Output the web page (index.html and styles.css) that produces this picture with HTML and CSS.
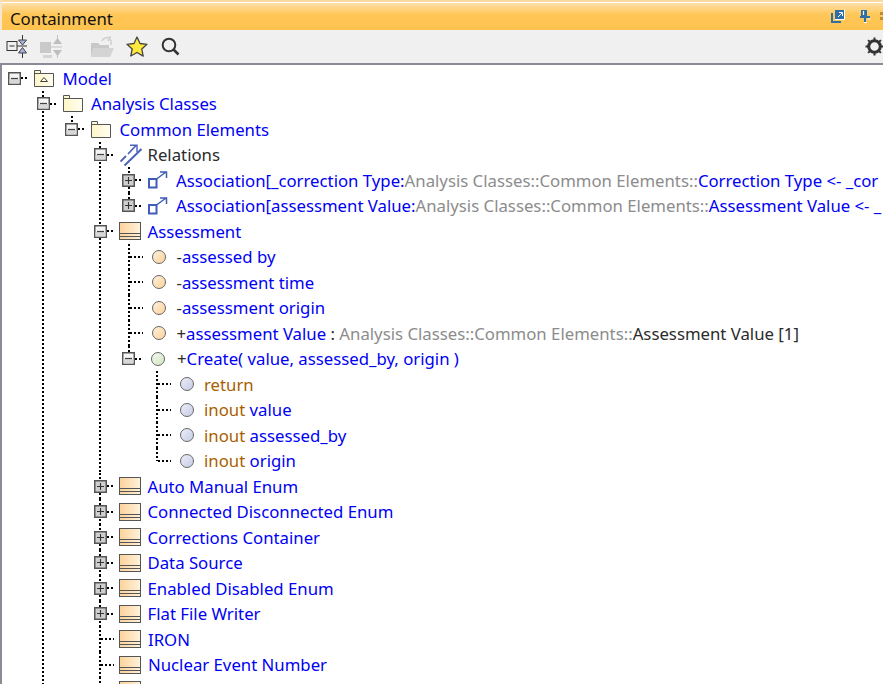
FILE: index.html
```html
<!DOCTYPE html>
<html>

<head>
    <meta charset="utf-8">
    <title>Containment</title>
    <link rel="stylesheet" href="styles.css">
</head>

<body>
    <svg class="defs" width="0" height="0">
        <symbol id="minus" viewBox="0 0 13 13">
            <rect x=".75" y=".75" width="11.5" height="11.5" fill="#f4f4f4" stroke="#555" stroke-width="1.5"/>
            <rect x="1.5" y="7" width="10" height="4.5" fill="#d8d8d8"/>
            <path d="M3 6.5h7" stroke="#444" stroke-width="1.2"/>
        </symbol>
        <symbol id="plus" viewBox="0 0 13 13">
            <rect x=".75" y=".75" width="11.5" height="11.5" fill="#cfcfcf" stroke="#555" stroke-width="1.5"/>
            <path d="M3 6.5h7M6.5 3v7" stroke="#333" stroke-width="1.1"/>
        </symbol>
        <linearGradient id="folderFill" x1="0" y1="0" x2="1" y2="0">
            <stop offset="0" stop-color="#fff6c8"/>
            <stop offset="1" stop-color="#fffdf0"/>
        </linearGradient>
        <linearGradient id="classFill" x1="0" y1="0" x2="1" y2="0">
            <stop offset="0" stop-color="#fdd29a"/>
            <stop offset="1" stop-color="#fff2dc"/>
        </linearGradient>
        <symbol id="folder" viewBox="0 0 20 17">
            <path d="M.5 16.5V.5h6v3h13v13z" fill="url(#folderFill)" stroke="#555"/>
            <path d="M.5 3.5h6" stroke="#555"/>
        </symbol>
        <symbol id="model" viewBox="0 0 20 17">
            <path d="M.5 16.5V.5h6v3h13v13z" fill="url(#folderFill)" stroke="#555"/>
            <path d="M.5 3.5h6" stroke="#555"/>
            <path d="M10 7.5l3.5 4h-7z" fill="none" stroke="#444"/>
        </symbol>
        <symbol id="relations" viewBox="0 0 23 22">
            <path d="M.5 17.5L6 12M8 10l8-8.500" stroke="#4a62b8" stroke-width="1.800" fill="none"/>
            <path d="M10 1.200h7V8" stroke="#4a62b8" stroke-width="1.400" fill="none"/>
            <path d="M4.500 21.500L21.500 5" stroke="#4a62b8" stroke-width="2" fill="none"/>
        </symbol>
        <symbol id="assoc" viewBox="0 0 20 18">
            <rect x="1" y="8" width="7.500" height="8.500" fill="none" stroke="#3f5cb8" stroke-width="2"/>
            <path d="M8.500 8L18 1M12 1h6.500v6" stroke="#3f5cb8" stroke-width="1.500" fill="none"/>
        </symbol>
        <symbol id="class" viewBox="0 0 22 18">
            <rect x=".5" y=".5" width="21" height="17" fill="url(#classFill)" stroke="#555"/>
            <path d="M.5 11.500h21M.5 14.500h21" stroke="#555"/>
        </symbol>
    </svg>

    <div class="panel">
        <div class="titlebar">
            <span class="title">Containment</span>
            <span class="title-tools">
                <svg width="14" height="14" viewBox="0 0 14 14">
                    <path d="M1 4v9h9" fill="none" stroke="#2f6fa8" stroke-width="2"/>
                    <rect x="4" y="1" width="9" height="9" fill="#2f6fa8"/>
                    <path d="M7 8l4-4M8 3.500h3.500V7" stroke="#fff" fill="none"/>
                    <path d="M4 10.500h9.500V.500" stroke="#fff" fill="none"/>
                </svg>
                <svg width="12" height="14" viewBox="0 0 12 14">
                    <path d="M2 1h6v6h3v2H7v4H5V9H1V7h1z" fill="#2f6fa8"/>
                    <path d="M4.500 2v4" stroke="#fff" stroke-width="1.200"/>
                    <path d="M8.500 10h3M5 13.500h3" stroke="#fff"/>
                </svg>
                <svg class="tool-cut" width="3" height="12" viewBox="0 0 3 12">
                    <path d="M0 2h3v3H0zM0 7h3v3H0z" fill="#b98c3c"/>
                </svg>
            </span>
        </div>

        <div class="toolbar">
            <svg class="tb-collapse" width="23" height="24" viewBox="0 0 23 24">
                <rect x="1" y="6.500" width="10" height="9" fill="none" stroke="#333"/>
                <path d="M3.500 11h5" stroke="#333"/>
                <path d="M11 11h10" stroke="#333"/>
                <path d="M16.500 0v5M16.500 18v5" stroke="#333"/>
                <path d="M12.500 5h8l-4 5zM12.500 18h8l-4-5.500z" fill="#a7b4dc" stroke="#444"/>
            </svg>
            <svg class="tb-expand" width="23" height="24" viewBox="0 0 23 24">
                <rect x="0" y="7" width="11" height="11" fill="#c9c9c9"/>
                <path d="M3 20h9v3H3z" fill="#d4d4d4"/>
                <path d="M13 9h9l-4.500-6zM13 15h9l-4.500 6z" fill="#bdbdbd"/>
                <path d="M10 12h12" stroke="#c4c4c4"/>
                <path d="M17.500 0v4M17.500 20v3" stroke="#c4c4c4"/>
            </svg>
            <svg class="tb-folder" width="23" height="23" viewBox="0 0 23 23">
                <path d="M0 8h7l2 2h9v10H0z" fill="#c8c8c8"/>
                <path d="M2 13h21l-4 9H0z" fill="#d4d4d4"/>
                <path d="M11 6c1-3 5-4 8-3M19 1v4h-3M20 5v5" stroke="#d0d0d0" stroke-width="1.500" fill="none"/>
            </svg>
            <svg class="tb-star" width="22" height="21" viewBox="0 0 22 21">
                <path d="M11 1l3 6.500 7 .8-5.200 4.800 1.400 7L11 16.500 4.800 20l1.400-7L1 8.300l7-.8z" fill="#ffe93c" stroke="#444" stroke-width="1.300" stroke-linejoin="round"/>
            </svg>
            <svg class="tb-search" width="19" height="19" viewBox="0 0 19 19">
                <circle cx="8" cy="8" r="6.300" fill="none" stroke="#333" stroke-width="2"/>
                <path d="M12.500 12.500l5 5" stroke="#333" stroke-width="2.500"/>
            </svg>
            <svg class="tb-gear" width="19" height="19" viewBox="0 0 19 19">
                <circle cx="9.500" cy="9.500" r="5.800" fill="none" stroke="#333" stroke-width="3"/>
                <path d="M9.500 .500v2.500M9.500 16v2.500M.500 9.500H3M16 9.500h2.500M3.100 3.100l1.800 1.800M14.100 14.100l1.800 1.800M15.900 3.100l-1.800 1.800M4.900 14.100l-1.800 1.800" stroke="#333" stroke-width="2"/>
            </svg>
        </div>

        <div class="tree">
            <ul class="root">
                <li class="end">
                    <div class="row">
                        <svg class="tgl"><use href="#minus"/></svg><i class="stub"></i>
                        <svg class="ico ico-folder"><use href="#model"/></svg>
                        <span class="txt">Model</span>
                    </div>
                    <ul>
                        <li>
                            <div class="row">
                                <svg class="tgl"><use href="#minus"/></svg><i class="stub"></i>
                                <svg class="ico ico-folder"><use href="#folder"/></svg>
                                <span class="txt">Analysis Classes</span>
                            </div>
                            <ul>
                                <li class="end">
                                    <div class="row">
                                        <svg class="tgl"><use href="#minus"/></svg><i class="stub"></i>
                                        <svg class="ico ico-folder"><use href="#folder"/></svg>
                                        <span class="txt">Common Elements</span>
                                    </div>
                                    <ul>
                                        <li>
                                            <div class="row">
                                                <svg class="tgl"><use href="#minus"/></svg><i class="stub"></i>
                                                <svg class="ico ico-rel"><use href="#relations"/></svg>
                                                <span class="txt dark">Relations</span>
                                            </div>
                                            <ul>
                                                <li>
                                                    <div class="row">
                                                        <svg class="tgl"><use href="#plus"/></svg><i class="stub"></i>
                                                        <svg class="ico ico-assoc"><use href="#assoc"/></svg>
                                                        <span class="txt">Association[_correction Type:<span class="gray">Analysis Classes::Common Elements::</span>Correction Type &lt;- _cor</span>
                                                    </div>
                                                </li>
                                                <li class="end">
                                                    <div class="row">
                                                        <svg class="tgl"><use href="#plus"/></svg><i class="stub"></i>
                                                        <svg class="ico ico-assoc"><use href="#assoc"/></svg>
                                                        <span class="txt">Association[assessment Value:<span class="gray">Analysis Classes::Common Elements::</span>Assessment Value &lt;- _</span>
                                                    </div>
                                                </li>
                                            </ul>
                                        </li>
                                        <li>
                                            <div class="row">
                                                <svg class="tgl"><use href="#minus"/></svg><i class="stub"></i>
                                                <svg class="ico ico-class"><use href="#class"/></svg>
                                                <span class="txt">Assessment</span>
                                            </div>
                                            <ul>
                                                <li>
                                                    <div class="row leaf">
                                                        <i class="stub"></i><i class="dot attr"></i>
                                                        <span class="txt"><span class="dark">-</span>assessed by</span>
                                                    </div>
                                                </li>
                                                <li>
                                                    <div class="row leaf">
                                                        <i class="stub"></i><i class="dot attr"></i>
                                                        <span class="txt"><span class="dark">-</span>assessment time</span>
                                                    </div>
                                                </li>
                                                <li>
                                                    <div class="row leaf">
                                                        <i class="stub"></i><i class="dot attr"></i>
                                                        <span class="txt"><span class="dark">-</span>assessment origin</span>
                                                    </div>
                                                </li>
                                                <li>
                                                    <div class="row leaf">
                                                        <i class="stub"></i><i class="dot attr"></i>
                                                        <span class="txt"><span class="dark">+</span>assessment Value <span class="dark">:</span> <span class="gray">Analysis Classes::Common Elements::</span><span class="dark">Assessment Value [1]</span></span>
                                                    </div>
                                                </li>
                                                <li class="end">
                                                    <div class="row">
                                                        <svg class="tgl"><use href="#minus"/></svg><i class="stub"></i>
                                                        <i class="dot oper"></i>
                                                        <span class="txt"><span class="dark">+</span>Create( value, assessed_by, origin )</span>
                                                    </div>
                                                    <ul>
                                                        <li>
                                                            <div class="row leaf">
                                                                <i class="stub"></i><i class="dot param"></i>
                                                                <span class="txt"><span class="brown">return</span></span>
                                                            </div>
                                                        </li>
                                                        <li>
                                                            <div class="row leaf">
                                                                <i class="stub"></i><i class="dot param"></i>
                                                                <span class="txt"><span class="brown">inout</span> value</span>
                                                            </div>
                                                        </li>
                                                        <li>
                                                            <div class="row leaf">
                                                                <i class="stub"></i><i class="dot param"></i>
                                                                <span class="txt"><span class="brown">inout</span> assessed_by</span>
                                                            </div>
                                                        </li>
                                                        <li class="end">
                                                            <div class="row leaf">
                                                                <i class="stub"></i><i class="dot param"></i>
                                                                <span class="txt"><span class="brown">inout</span> origin</span>
                                                            </div>
                                                        </li>
                                                    </ul>
                                                </li>
                                            </ul>
                                        </li>
                                        <li>
                                            <div class="row">
                                                <svg class="tgl"><use href="#plus"/></svg><i class="stub"></i>
                                                <svg class="ico ico-class"><use href="#class"/></svg>
                                                <span class="txt">Auto Manual Enum</span>
                                            </div>
                                        </li>
                                        <li>
                                            <div class="row">
                                                <svg class="tgl"><use href="#plus"/></svg><i class="stub"></i>
                                                <svg class="ico ico-class"><use href="#class"/></svg>
                                                <span class="txt">Connected Disconnected Enum</span>
                                            </div>
                                        </li>
                                        <li>
                                            <div class="row">
                                                <svg class="tgl"><use href="#plus"/></svg><i class="stub"></i>
                                                <svg class="ico ico-class"><use href="#class"/></svg>
                                                <span class="txt">Corrections Container</span>
                                            </div>
                                        </li>
                                        <li>
                                            <div class="row">
                                                <svg class="tgl"><use href="#plus"/></svg><i class="stub"></i>
                                                <svg class="ico ico-class"><use href="#class"/></svg>
                                                <span class="txt">Data Source</span>
                                            </div>
                                        </li>
                                        <li>
                                            <div class="row">
                                                <svg class="tgl"><use href="#plus"/></svg><i class="stub"></i>
                                                <svg class="ico ico-class"><use href="#class"/></svg>
                                                <span class="txt">Enabled Disabled Enum</span>
                                            </div>
                                        </li>
                                        <li>
                                            <div class="row">
                                                <svg class="tgl"><use href="#plus"/></svg><i class="stub"></i>
                                                <svg class="ico ico-class"><use href="#class"/></svg>
                                                <span class="txt">Flat File Writer</span>
                                            </div>
                                        </li>
                                        <li>
                                            <div class="row leaf">
                                                <i class="stub"></i>
                                                <svg class="ico ico-class"><use href="#class"/></svg>
                                                <span class="txt">IRON</span>
                                            </div>
                                        </li>
                                        <li>
                                            <div class="row leaf">
                                                <i class="stub"></i>
                                                <svg class="ico ico-class"><use href="#class"/></svg>
                                                <span class="txt">Nuclear Event Number</span>
                                            </div>
                                        </li>
                                        <li>
                                            <div class="row leaf">
                                                <i class="stub"></i>
                                                <svg class="ico ico-class"><use href="#class"/></svg>
                                            </div>
                                        </li>
                                    </ul>
                                </li>
                            </ul>
                        </li>
                    </ul>
                </li>
            </ul>
        </div>
    </div>
</body>
</html>
```

FILE: styles.css
```css
* {
    box-sizing: border-box;
}

html,
body {
    margin: 0;
    height: 100%;
    overflow: hidden;
}

.defs {
    display: block;
    height: 0;
}

.panel {
    height: 684px;
    display: flex;
    flex-direction: column;
    border-left: 2px solid #8b8b95;
    background-color: #fff;
    font-family: "Noto Sans", "Open Sans", sans-serif;
}

.titlebar {
    height: 30px;
    flex: none;
    display: flex;
    align-items: center;
    justify-content: space-between;
    margin-left: -2px;
    padding: 4px 0 0 8px;
    border-top: 2px solid #fcd9a0;
    border-left: 2px solid #f6e6d0;
    box-shadow: inset 0 1px 0 #fff;
    background: linear-gradient(#ffe2b0 0, #ffc757 45%, #ffc24e 100%);
}

.title {
    font-size: 16.800px;
    color: #111;
}

.title-tools {
    display: flex;
    align-items: center;
    gap: 14px;
    margin-top: -4px;
}

.tool-cut {
    margin-left: -5px;
}

.toolbar {
    height: 35px;
    flex: none;
    display: flex;
    align-items: center;
    margin-left: -2px;
    background-color: #f0f0f0;
    border-bottom: 2px solid #8b8b95;
}

.tb-collapse {
    margin-left: 6px;
}

.tb-expand {
    margin-left: 11px;
}

.tb-folder {
    margin-left: 28px;
}

.tb-star {
    margin-left: 12px;
}

.tb-search {
    margin-left: 13px;
}

.tb-gear {
    margin-left: auto;
    transform: translateX(1px);
}

.tree {
    flex: 1;
    overflow: hidden;
    padding-top: .4px;
    font-size: 16.750px;
    color: #0000f5;
    white-space: nowrap;
}

.tree ul {
    list-style: none;
    margin: 0;
    padding: 0 0 0 28.5px;
}

.tree .root {
    padding: 0 0 0 11.500px;
}

/* dotted guide drawn down the left of every item */
.tree li {
    background: repeating-linear-gradient(#000 0 2px, transparent 2px 4px) no-repeat left top / 2px 100%;
}

.tree li.end {
    background-size: 2px 13px;
}

.tree .root > li {
    background: none;
}

.row {
    height: 25.500px;
    display: flex;
    align-items: center;
}

.tgl {
    flex: none;
    width: 13px;
    height: 13px;
    margin-left: -5.500px;
}

.stub {
    flex: none;
    width: 7px;
    height: 2px;
    margin-right: 6px;
    background: repeating-linear-gradient(90deg, #000 0 2px, transparent 2px 4px);
}

.leaf .stub {
    width: 13px;
    margin-left: 2px;
}

.ico {
    flex: none;
}

.ico-folder {
    width: 20px;
    height: 17px;
    margin-right: 8.500px;
}

.ico-rel {
    width: 23px;
    height: 22px;
    margin-right: 5px;
}

.ico-assoc {
    width: 20px;
    height: 18px;
    margin-right: 8px;
}

.ico-class {
    width: 22px;
    height: 18px;
    margin-left: -1px;
    margin-right: 7px;
}

.dot {
    flex: none;
    width: 14px;
    height: 14px;
    margin-left: 3px;
    border-radius: 50%;
    border: 1.500px solid #666;
}

.attr {
    margin-right: 11px;
    background: linear-gradient(135deg, #fff0dc, #fdd29a);
}

.oper {
    margin-right: 12px;
    background: linear-gradient(135deg, #f2f8ec, #d3e6c4);
}

.param {
    margin-right: 10px;
    background: linear-gradient(135deg, #eceef8, #c6cbe6);
}

.dark {
    color: #2b2b2b;
}

.gray {
    color: #8c8c8c;
}

.brown {
    color: #a85f00;
}
```
